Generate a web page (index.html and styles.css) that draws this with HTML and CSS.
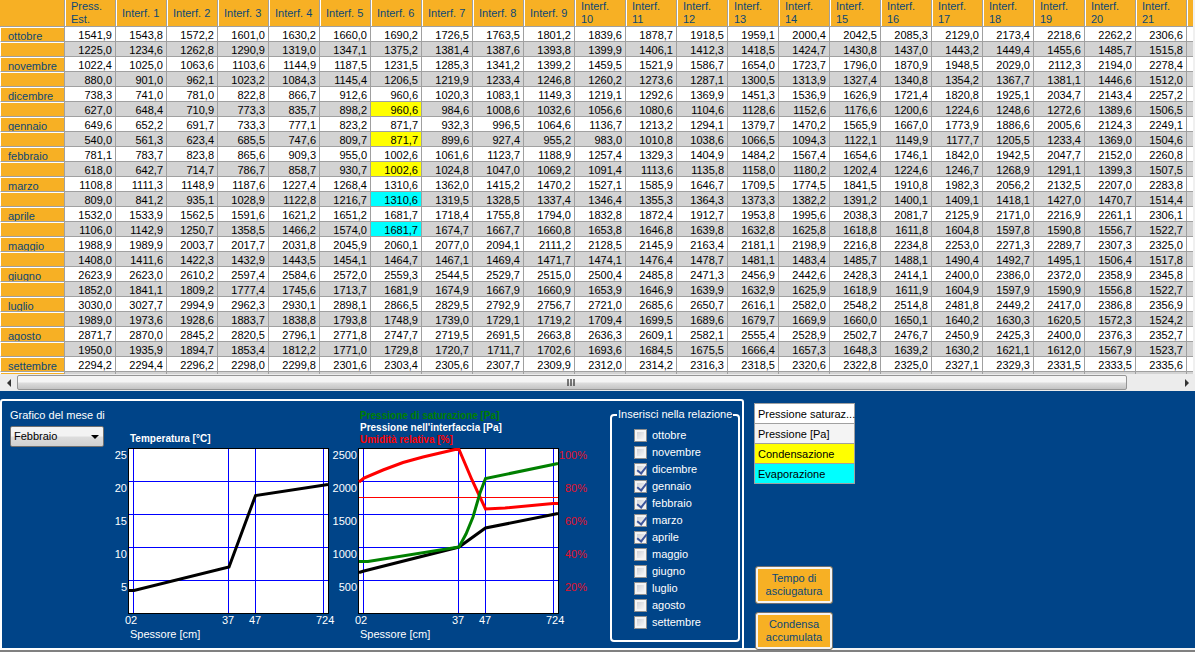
FILE: index.html
```html
<!DOCTYPE html>
<html lang="it">
<head>
<meta charset="utf-8">
<title>Verifica termoigrometrica</title>
<link rel="stylesheet" href="styles.css">
</head>
<body>
<main class="window">
  <div class="grid-view">
    <table class="grid">
      <thead><tr id="grid-head"><th class="corner"></th></tr></thead>
      <tbody id="grid-body"></tbody>
    </table>
  </div>
  <div class="scrollbar">
    <button class="scroll-arrow" type="button" aria-label="Scorri a sinistra"><svg width="4" height="8" viewBox="0 0 4 8"><path d="M4 0v8L0 4z" fill="#333"/></svg></button>
    <div class="scroll-track"><div class="scroll-thumb"><svg width="9" height="7" viewBox="0 0 9 7"><path d="M1 0v7M4 0v7M7 0v7" stroke="#444" stroke-width="1.4"/></svg></div></div>
    <button class="scroll-arrow" type="button" aria-label="Scorri a destra"><svg width="4" height="8" viewBox="0 0 4 8"><path d="M0 0v8l4-4z" fill="#333"/></svg></button>
  </div>

  <section class="lower">
    <div class="panel">
      <div class="month">
        <label for="month">Grafico del mese di</label>
        <span class="select-box"><select id="month"><option>Febbraio</option></select></span>
      </div>

      <svg class="chart" width="230" height="246" viewBox="110 401 230 246" role="img" aria-label="Temperatura">
        <text class="title" x="130" y="442" fill="#fff">Temperatura [°C]</text>
        <rect x="128.5" y="448.5" width="200" height="165" fill="#fff" stroke="#000"/>
        <path class="lines" d="M133.5 449V613M228.5 449V613M255.5 449V613M323.5 449V613M129 481.500H328M129 514.500H328M129 547.500H328M129 580.500H328"/>
        <polyline class="curve" stroke="#000" points="129,590.5 134,590.5 229,567 255.500,495.500 328,484.500"/>
        <g class="axis end">
          <text x="127" y="459">25</text><text x="127" y="492">20</text><text x="127" y="525">15</text><text x="127" y="558">10</text><text x="127" y="591">5</text>
        </g>
        <g class="axis">
          <text x="125" y="624">0</text><text x="131" y="624">2</text><text x="222" y="624">37</text><text x="249" y="624">47</text><text x="316" y="624">724</text>
          <text x="130" y="638">Spessore [cm]</text>
        </g>
      </svg>

      <svg class="chart" width="260" height="246" viewBox="340 401 260 246" role="img" aria-label="Pressione e umidità">
        <text class="title" x="360" y="419" fill="#008000">Pressione di saturazione [Pa]</text>
        <text class="title" x="360" y="431" fill="#fff">Pressione nell'interfaccia [Pa]</text>
        <text class="title" x="360" y="443" fill="#f00">Umidità relativa [%]</text>
        <rect x="358.5" y="448.5" width="200" height="165" fill="#fff" stroke="#000"/>
        <path class="lines" d="M363.5 449V613M458.500 449V613M485.500 449V613M553.500 449V613M359 481.500H558M359 514.500H558M359 547.500H558M359 580.500H558"/>
        <path d="M359 497.500H558" stroke="#f00"/>
        <polyline class="curve" stroke="#000" points="359,572.5 364,571 459,547 485.5,528 558,513.5"/>
        <polyline class="curve" stroke="#f00" points="359,482 364,478 383,470 403,462.500 423,457 440,453 455,449.500 459,449.500 472,480 485.500,509 505,508 553,503.500 558,503.500"/>
        <polyline class="curve" stroke="#008000" points="359,561.5 368,561.5 459,547 466,534 473,517 480,493 485.5,478.500 558,463.500"/>
        <g class="axis end">
          <text x="357" y="459">2500</text><text x="357" y="492">2000</text><text x="357" y="525">1500</text><text x="357" y="558">1000</text><text x="357" y="591">500</text>
        </g>
        <g class="axis end red">
          <text x="587" y="459">100%</text><text x="587" y="492">80%</text><text x="587" y="525">60%</text><text x="587" y="558">40%</text><text x="587" y="591">20%</text>
        </g>
        <g class="axis">
          <text x="355" y="624">0</text><text x="361" y="624">2</text><text x="452" y="624">37</text><text x="479" y="624">47</text><text x="546" y="624">724</text>
          <text x="360" y="638">Spessore [cm]</text>
        </g>
      </svg>

      <fieldset class="report">
        <legend>Inserisci nella relazione</legend>
        <label><input type="checkbox">ottobre</label>
        <label><input type="checkbox">novembre</label>
        <label><input type="checkbox" checked>dicembre</label>
        <label><input type="checkbox" checked>gennaio</label>
        <label><input type="checkbox" checked>febbraio</label>
        <label><input type="checkbox" checked>marzo</label>
        <label><input type="checkbox" checked>aprile</label>
        <label><input type="checkbox">maggio</label>
        <label><input type="checkbox">giugno</label>
        <label><input type="checkbox">luglio</label>
        <label><input type="checkbox">agosto</label>
        <label><input type="checkbox">settembre</label>
      </fieldset>
    </div>

    <div class="side">
      <ul class="key">
        <li>Pressione saturaz...</li>
        <li class="soft">Pressione [Pa]</li>
        <li class="condensation">Condensazione</li>
        <li class="evaporation">Evaporazione</li>
      </ul>
      <div class="actions">
        <button type="button">Tempo di asciugatura</button>
        <button type="button">Condensa accumulata</button>
      </div>
    </div>
  </section>
</main>
<script src="grid.js"></script>
</body>
</html>
```
FILE: styles.css
```css
* { box-sizing: border-box; }

body {
  margin: 0;
  background: #fff;
  color: #000;
  font: 11px/13px "Liberation Sans", Arial, sans-serif;
}

button, select, input { font: inherit; }

.window { overflow: hidden; }

/* Data grid */
.grid-view {
  height: 374px;
  overflow: hidden;
  border-right: 2px solid #f0f0f0;
}

.grid {
  width: 1238px;
  table-layout: fixed;
  border-collapse: separate;
  border-spacing: 0;
}

.grid th, .grid td {
  overflow: hidden;
  padding: 0;
  border: solid #a0a0a0;
  border-width: 0 1px 1px 0;
  white-space: nowrap;
}

.grid th {
  background: #f7b024;
  color: #0b4876;
  font-weight: normal;
  text-align: left;
}

.grid thead th {
  height: 27px;
  padding-right: 3px;
  padding-left: 6px;
  box-shadow: inset 1px 0 #fff;
  white-space: normal;
}

.grid .corner {
  width: 65px;
  box-shadow: none;
}

.grid tbody th {
  height: 15px;
  padding-left: 7px;
  border-left: 1px solid #fff;
  box-shadow: inset 0 1px #fff;
}

.grid tbody th span {
  display: block;
  height: 14px;
  padding-top: 2px;
  overflow: hidden;
  line-height: 14px;
}

.grid td {
  height: 15px;
  padding: 2px 3px 0 0;
  line-height: 12px;
  text-align: right;
}

.grid .interface td { background: #d3d3d3; }
.grid .interface td.condensation, .key .condensation { background: #ff0; }
.grid .interface td.evaporation, .key .evaporation { background: #0ff; }

/* Horizontal scroll bar */
.scrollbar {
  display: flex;
  height: 17px;
  padding-top: 1px;
  background: #ececec;
}

.scroll-arrow {
  display: flex;
  flex: none;
  align-items: center;
  justify-content: center;
  width: 17px;
  padding: 0;
  border: 0;
  background: none;
}

.scroll-track { flex: 1; }

.scroll-thumb {
  display: flex;
  align-items: center;
  justify-content: center;
  width: 95.6%;
  height: 15px;
  border: 1px solid #959595;
  border-radius: 2px;
  background: linear-gradient(#f5f5f5 0 45%, #dcdcdc 55%, #c4c4c4);
}

/* Lower area */
.lower {
  display: flex;
  height: 261px;
  padding-top: 8px;
  overflow: hidden;
  border-bottom: 2px solid #808080;
  background: #048;
  box-shadow: inset 0 -2px #f4f4f4;
}

.panel {
  display: flex;
  flex: none;
  width: 744px;
  height: 251px;
  border: 2px solid #fff;
  border-radius: 3px 3px 0 0;
  color: #fff;
}

.month {
  display: flex;
  flex-direction: column;
  width: 108px;
  padding: 8px 6px 0 8px;
  gap: 4px;
  white-space: nowrap;
}

.select-box { position: relative; }

.select-box::after {
  content: "";
  position: absolute;
  top: 9px;
  right: 5px;
  border: 4px solid transparent;
  border-top-color: #000;
  border-bottom: 0;
  pointer-events: none;
}

.select-box select {
  appearance: none;
  width: 100%;
  height: 21px;
  padding: 0 3px;
  border: 1px solid #707070;
  border-radius: 2px;
  background: linear-gradient(#f3f3f3 0 48%, #ddd 52%, #d0d0d0);
  color: #000;
}

.chart {
  flex: none;
  overflow: visible;
}

.chart .title {
  font-size: 10px;
  font-weight: bold;
}

.chart .lines { stroke: #00f; }
.chart .curve { fill: none; stroke-width: 3px; }
.chart .axis { fill: #fff; }
.chart .end { text-anchor: end; }
.chart .red { fill: #e0102c; }

.report {
  flex: 1;
  height: 234px;
  min-width: 0;
  margin: 7px 2px 0 10px;
  padding: 6px 0 0 22px;
  border: 2px solid #fff;
  border-radius: 4px;
}

.report legend {
  margin-left: -17px;
  padding: 0 1px;
  white-space: nowrap;
}

.report label {
  display: flex;
  align-items: center;
  height: 17px;
  gap: 5px;
}

.report input {
  appearance: none;
  position: relative;
  width: 13px;
  height: 13px;
  margin: 0;
  border: 1px solid #8e8f8f;
  background: linear-gradient(135deg, #c4c8cf, #fff);
  box-shadow: inset 0 0 0 2px #f4f4f4;
}

.report input:checked::after {
  content: "";
  position: absolute;
  top: 0;
  left: 4px;
  width: 4px;
  height: 8px;
  border: solid #3c559b;
  border-width: 0 2px 2px 0;
  transform: rotate(38deg);
}

.side {
  display: flex;
  flex-direction: column;
  flex: none;
  width: 101px;
  margin-left: 10px;
  padding-top: 4px;
}

.key {
  margin: 0;
  padding: 0;
  border: solid #a0a0a0;
  border-width: 1px 1px 0;
  list-style: none;
  white-space: nowrap;
}

.key li {
  height: 20px;
  padding: 0 3px;
  border-bottom: 1px solid #a0a0a0;
  background: #fff;
  line-height: 20px;
}

.key .soft { background: #f4f4f4; }

.actions {
  display: flex;
  flex-direction: column;
  width: 78px;
  margin: 82px 0 0 1px;
  gap: 8px;
}

.actions button {
  height: 38px;
  padding: 0 2px;
  border: 1px solid #707070;
  border-radius: 3px;
  background: #f7b024;
  box-shadow: inset 0 0 0 2px #f4f4f4;
  color: #0b4876;
}
```
FILE: grid.js
```js
// Per month: saturation pressures on the first row, interface pressures on the second.
const months = [
  ["ottobre",
   "1541,9 1543,8 1572,2 1601,0 1630,2 1660,0 1690,2 1726,5 1763,5 1801,2 1839,6 1878,7 1918,5 1959,1 2000,4 2042,5 2085,3 2129,0 2173,4 2218,6 2262,2 2306,6",
   "1225,0 1234,6 1262,8 1290,9 1319,0 1347,1 1375,2 1381,4 1387,6 1393,8 1399,9 1406,1 1412,3 1418,5 1424,7 1430,8 1437,0 1443,2 1449,4 1455,6 1485,7 1515,8"],
  ["novembre",
   "1022,4 1025,0 1063,6 1103,6 1144,9 1187,5 1231,5 1285,3 1341,2 1399,2 1459,5 1521,9 1586,7 1654,0 1723,7 1796,0 1870,9 1948,5 2029,0 2112,3 2194,0 2278,4",
   "880,0 901,0 962,1 1023,2 1084,3 1145,4 1206,5 1219,9 1233,4 1246,8 1260,2 1273,6 1287,1 1300,5 1313,9 1327,4 1340,8 1354,2 1367,7 1381,1 1446,6 1512,0"],
  ["dicembre",
   "738,3 741,0 781,0 822,8 866,7 912,6 960,6 1020,3 1083,1 1149,3 1219,1 1292,6 1369,9 1451,3 1536,9 1626,9 1721,4 1820,8 1925,1 2034,7 2143,4 2257,2",
   "627,0 648,4 710,9 773,3 835,7 898,2 960,6 984,6 1008,6 1032,6 1056,6 1080,6 1104,6 1128,6 1152,6 1176,6 1200,6 1224,6 1248,6 1272,6 1389,6 1506,5", "condensation"],
  ["gennaio",
   "649,6 652,2 691,7 733,3 777,1 823,2 871,7 932,3 996,5 1064,6 1136,7 1213,2 1294,1 1379,7 1470,2 1565,9 1667,0 1773,9 1886,6 2005,6 2124,3 2249,1",
   "540,0 561,3 623,4 685,5 747,6 809,7 871,7 899,6 927,4 955,2 983,0 1010,8 1038,6 1066,5 1094,3 1122,1 1149,9 1177,7 1205,5 1233,4 1369,0 1504,6", "condensation"],
  ["febbraio",
   "781,1 783,7 823,8 865,6 909,3 955,0 1002,6 1061,6 1123,7 1188,9 1257,4 1329,3 1404,9 1484,2 1567,4 1654,6 1746,1 1842,0 1942,5 2047,7 2152,0 2260,8",
   "618,0 642,7 714,7 786,7 858,7 930,7 1002,6 1024,8 1047,0 1069,2 1091,4 1113,6 1135,8 1158,0 1180,2 1202,4 1224,6 1246,7 1268,9 1291,1 1399,3 1507,5", "condensation"],
  ["marzo",
   "1108,8 1111,3 1148,9 1187,6 1227,4 1268,4 1310,6 1362,0 1415,2 1470,2 1527,1 1585,9 1646,7 1709,5 1774,5 1841,5 1910,8 1982,3 2056,2 2132,5 2207,0 2283,8",
   "809,0 841,2 935,1 1028,9 1122,8 1216,7 1310,6 1319,5 1328,5 1337,4 1346,4 1355,3 1364,3 1373,3 1382,2 1391,2 1400,1 1409,1 1418,1 1427,0 1470,7 1514,4", "evaporation"],
  ["aprile",
   "1532,0 1533,9 1562,5 1591,6 1621,2 1651,2 1681,7 1718,4 1755,8 1794,0 1832,8 1872,4 1912,7 1953,8 1995,6 2038,3 2081,7 2125,9 2171,0 2216,9 2261,1 2306,1",
   "1106,0 1142,9 1250,7 1358,5 1466,2 1574,0 1681,7 1674,7 1667,7 1660,8 1653,8 1646,8 1639,8 1632,8 1625,8 1618,8 1611,8 1604,8 1597,8 1590,8 1556,7 1522,7", "evaporation"],
  ["maggio",
   "1988,9 1989,9 2003,7 2017,7 2031,8 2045,9 2060,1 2077,0 2094,1 2111,2 2128,5 2145,9 2163,4 2181,1 2198,9 2216,8 2234,8 2253,0 2271,3 2289,7 2307,3 2325,0",
   "1408,0 1411,6 1422,3 1432,9 1443,5 1454,1 1464,7 1467,1 1469,4 1471,7 1474,1 1476,4 1478,7 1481,1 1483,4 1485,7 1488,1 1490,4 1492,7 1495,1 1506,4 1517,8"],
  ["giugno",
   "2623,9 2623,0 2610,2 2597,4 2584,6 2572,0 2559,3 2544,5 2529,7 2515,0 2500,4 2485,8 2471,3 2456,9 2442,6 2428,3 2414,1 2400,0 2386,0 2372,0 2358,9 2345,8",
   "1852,0 1841,1 1809,2 1777,4 1745,6 1713,7 1681,9 1674,9 1667,9 1660,9 1653,9 1646,9 1639,9 1632,9 1625,9 1618,9 1611,9 1604,9 1597,9 1590,9 1556,8 1522,7"],
  ["luglio",
   "3030,0 3027,7 2994,9 2962,3 2930,1 2898,1 2866,5 2829,5 2792,9 2756,7 2721,0 2685,6 2650,7 2616,1 2582,0 2548,2 2514,8 2481,8 2449,2 2417,0 2386,8 2356,9",
   "1989,0 1973,6 1928,6 1883,7 1838,8 1793,8 1748,9 1739,0 1729,1 1719,2 1709,4 1699,5 1689,6 1679,7 1669,9 1660,0 1650,1 1640,2 1630,3 1620,5 1572,3 1524,2"],
  ["agosto",
   "2871,7 2870,0 2845,2 2820,5 2796,1 2771,8 2747,7 2719,5 2691,5 2663,8 2636,3 2609,1 2582,1 2555,4 2528,9 2502,7 2476,7 2450,9 2425,3 2400,0 2376,3 2352,7",
   "1950,0 1935,9 1894,7 1853,4 1812,2 1771,0 1729,8 1720,7 1711,7 1702,6 1693,6 1684,5 1675,5 1666,4 1657,3 1648,3 1639,2 1630,2 1621,1 1612,0 1567,9 1523,7"],
  ["settembre",
   "2294,2 2294,4 2296,2 2298,0 2299,8 2301,6 2303,4 2305,6 2307,7 2309,9 2312,0 2314,2 2316,3 2318,5 2320,6 2322,8 2325,0 2327,1 2329,3 2331,5 2333,5 2335,6",
   ""]
];
const COLUMNS = 22;
const CRITICAL_INTERFACE = 6;

const head = document.getElementById("grid-head");
for (let i = 0; i <= COLUMNS; i++) {
  const th = document.createElement("th");
  th.scope = "col";
  if (i < COLUMNS) th.textContent = i ? "Interf. " + i : "Press. Est.";
  head.append(th);
}

const body = document.getElementById("grid-body");
function addRow(name, values, className, mark) {
  const row = body.insertRow();
  row.className = className;
  const th = document.createElement("th");
  th.scope = "row";
  const label = document.createElement("span");
  label.textContent = name;
  th.append(label);
  row.append(th);
  const cells = values ? values.split(" ") : [];
  for (let i = 0; i <= COLUMNS; i++) {
    const td = row.insertCell();
    td.textContent = cells[i] || "";
    if (mark && i === CRITICAL_INTERFACE) td.className = mark;
  }
}
for (const [name, saturation, pressure, mark] of months) {
  addRow(name, saturation, "saturation");
  addRow("", pressure, "interface", mark);
}
```
